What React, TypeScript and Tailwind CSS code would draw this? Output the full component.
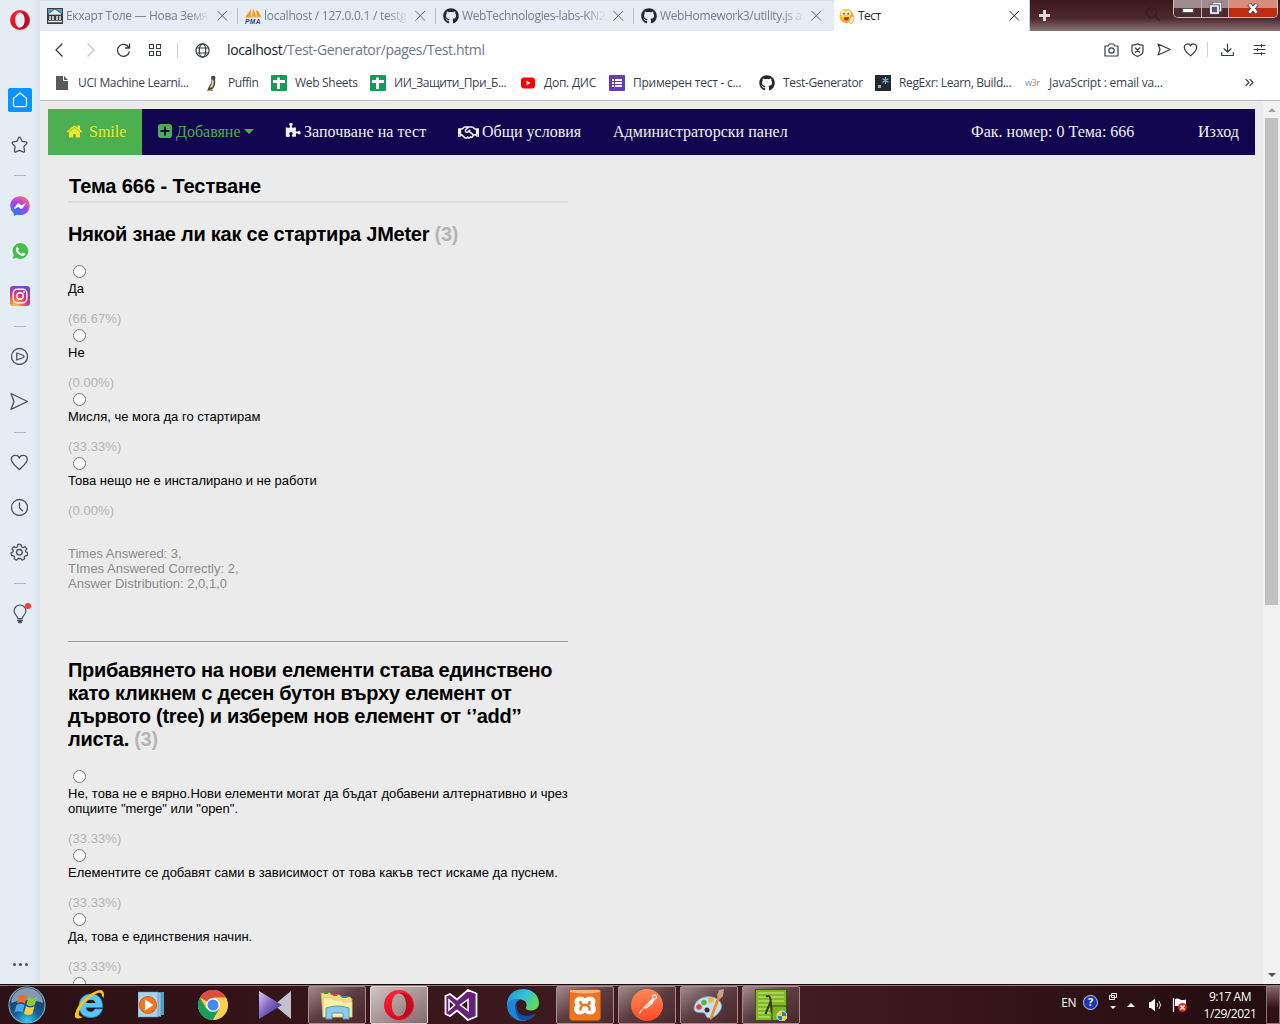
import React from "react";
import { FaGithub, FaFacebookMessenger, FaRegHandshake } from "react-icons/fa";

const line = { fill: "none", stroke: "currentColor", strokeLinecap: "round", strokeLinejoin: "round" } as const;

/* ---------- small shared drawings ---------- */

function CloseX({ className }: { className: string }) {
  return (
    <svg width="12" height="12" viewBox="0 0 12 12" className={className}>
      <path d="M1.500 1l9.500 9.500M11 1L1.500 10.500" stroke="currentColor" strokeWidth="1" />
    </svg>
  );
}

function OperaO({ size, id }: { size: number; id: string }) {
  return (
    <svg width={size} height={size} viewBox="0 0 20 20">
      <defs>
        <linearGradient id={id} x1="0" y1="0" x2="0" y2="1">
          <stop offset="0" stopColor="#ff2238" />
          <stop offset="1" stopColor="#dc0c20" />
        </linearGradient>
      </defs>
      <path fillRule="evenodd" fill={`url(#${id})`} d="M10 0a10 10 0 100 20a10 10 0 000-20zM10 2.400c2.900 0 4.800 3.300 4.800 7.600s-1.900 7.600-4.800 7.600s-4.800-3.300-4.800-7.600s1.900-7.600 4.800-7.600z" />
      <path fill="#a80c1c" d="M10 2.400c2-1 4.500-.6 6 .8c4.500 4 4.500 9.600 0 13.600c-1.500 1.400-4 1.800-6 .8c2.900 0 4.800-3.300 4.800-7.600s-1.900-7.600-4.800-7.600z" opacity=".7" />
    </svg>
  );
}

function SheetIcon() {
  return (
    <svg width="16" height="16" viewBox="0 0 16 16">
      <rect width="16" height="16" rx="1" fill="#0f9d58" />
      <path d="M2 5h12v3H9v6H6V8H2z" fill="#fff" />
      <path d="M6 2.500h3V6H6z" fill="#fff" />
    </svg>
  );
}

function MuseumIcon() {
  return (
    <svg width="16" height="16" viewBox="0 0 16 16">
      <rect width="16" height="16" fill="#3d3d3d" />
      <rect x="1" y="1" width="14" height="6" fill="#35a8dc" />
      <path d="M8 1L1.500 5.500V7h13V5.500z" fill="#eee" stroke="#333" strokeWidth=".7" />
      <path d="M3 8v4M6 8v4M10 8v4M13 8v4" stroke="#eee" strokeWidth="1.500" />
      <path d="M1 13.500h14" stroke="#eee" strokeWidth="1.500" />
    </svg>
  );
}

function PmaIcon() {
  return (
    <svg width="16" height="16" viewBox="0 0 16 16">
      <path d="M0 9.500L6 1v8.500zM7 9l1-9 3.500 9zM12 9l-1-7c3 1 4 4 5 7z" fill="#f79a1c" />
      <path d="M1 10c4-2 10-1 14-1" stroke="#f9b65a" fill="none" />
      <text x="0" y="15.500" fontSize="6.500" fontWeight="bold" fontStyle="italic" fill="#33407c" fontFamily="Liberation Sans, sans-serif" textLength="15.500">PMA</text>
    </svg>
  );
}

function Smiley() {
  return (
    <svg width="16" height="16" viewBox="0 0 16 16">
      <circle cx="7.500" cy="8" r="7" fill="#f9a81a" />
      <circle cx="6.500" cy="6.500" r="5.500" fill="#ffd12e" />
      <circle cx="4.500" cy="5" r="2.200" fill="#fff" />
      <circle cx="9.500" cy="5" r="2.200" fill="#fff" />
      <circle cx="4.900" cy="5.600" r="1.200" fill="#3a7eb8" />
      <circle cx="9.300" cy="5.600" r="1.200" fill="#3a7eb8" />
      <path d="M4.500 9.500l5.500-.5c0 4-4.500 5-5.500.5z" fill="#b4262a" />
      <path d="M12 9l3-1v5l-3 3-2-2.500z" fill="#f6ead8" stroke="#e2a33a" strokeWidth=".6" />
    </svg>
  );
}

/* ---------- tab strip ---------- */

const tabs = [
  { title: "Екхарт Толе — Нова Земя", icon: <MuseumIcon />, track: "tracking-[-0.33px]" },
  { title: "localhost / 127.0.0.1 / testg", icon: <PmaIcon />, track: "tracking-[-0.26px]" },
  { title: "WebTechnologies-labs-KN2", icon: <FaGithub size={16} color="#24292e" />, track: "tracking-[-0.36px]" },
  { title: "WebHomework3/utility.js at", icon: <FaGithub size={16} color="#24292e" />, track: "tracking-[-0.36px]" },
];

function WindowButtons() {
  return (
    <div className="flex h-[18px] w-[105px] overflow-hidden rounded-b-[5px] border border-t-0 border-[#cbbfc0]">
      <div className="flex w-[28px] items-center justify-center border-r border-[#bfb0b2] bg-linear-to-b from-[#a08b8e] from-50% to-[#4d2c30] to-50%">
        <div className="mt-1 h-[5px] w-[12px] rounded-[1px] border border-[#54566b] bg-white" />
      </div>
      <div className="flex w-[27px] items-center justify-center border-r border-[#bfb0b2] bg-linear-to-b from-[#a08b8e] from-50% to-[#4d2c30] to-50%">
        <svg width="13" height="13" viewBox="0 0 13 13">
          <path d="M4.500 1.500h7v7h-7z" fill="none" stroke="#54566b" strokeWidth="3" />
          <path d="M4.500 1.500h7v7h-7z" fill="none" stroke="#fff" strokeWidth="1.500" />
          <path d="M2 4h7v7H2z" fill="#777" stroke="#54566b" strokeWidth="3" />
          <path d="M2 4h7v7H2z" fill="#54566b" stroke="#fff" strokeWidth="1.700" />
        </svg>
      </div>
      <div className="flex flex-1 items-center justify-center bg-linear-to-b from-[#d58d7c] from-50% to-[#bd2c10] to-50%">
        <svg width="12" height="11" viewBox="0 0 12 11" className="mr-px">
          <path d="M2 1l8 9M10 1l-8 9" stroke="#5d4550" strokeWidth="4.500" />
          <path d="M2.300 1.300l7.400 8.400M9.700 1.300l-7.400 8.400" stroke="#fff" strokeWidth="2.600" />
        </svg>
      </div>
    </div>
  );
}

function TabStrip() {
  return (
    <div className="flex h-[31px] bg-[#e4ecf4]">
      <div className="flex w-[794px] border-t border-[#d2dde8]">
        {tabs.map((t, i) => (
          <div key={i} className="flex w-[198px] shrink-0 items-center pl-[7px]">
            <span className="w-[19px]">{t.icon}</span>
            <span className={`w-[144px] whitespace-nowrap text-[12px] text-[#75818e] mask-r-from-85% ${t.track}`}>{t.title}</span>
            <CloseX className="ml-[6px] text-[#5a6672]" />
            <span className={i < 3 ? "ml-auto h-4 w-px bg-[#b3c1cf]" : "hidden"} />
          </div>
        ))}
      </div>
      <div className="flex w-[195px] items-center bg-white pl-[5px]">
        <Smiley />
        <span className="ml-[3px] text-[12px] tracking-[-0.5px] text-[#24292f]">Тест</span>
        <CloseX className="mr-[9px] ml-auto text-[#24292f]" />
      </div>
      <div className="flex flex-1 items-start border-l border-[#c7d4e4] bg-linear-to-b from-[#3a171c] via-[#4e2a2f] via-60% to-[#8d7578]">
        <svg width="13" height="13" viewBox="0 0 13 13" className="mt-[9px] ml-[8px]">
          <path d="M6.500 1v11M1 6.500h11" stroke="#e0d8d9" strokeWidth="3" />
        </svg>
        <svg width="16" height="16" viewBox="0 0 16 16" className="mt-[6px] ml-[94px] text-[#2e2023]">
          <circle cx="6.500" cy="6.500" r="5" {...line} strokeWidth="1.200" />
          <path d="M10 10l4.500 4.500" {...line} strokeWidth="1.200" />
        </svg>
        <div className="ml-[12px]"><WindowButtons /></div>
      </div>
    </div>
  );
}

/* ---------- address bar ---------- */

function AddressBar() {
  return (
    <div className="flex h-[38px] items-center bg-white text-[#333d47]">
      <svg width="10" height="14" viewBox="0 0 10 14" className="ml-[14px]"><path d="M8 1L2 7l6 6" {...line} strokeWidth="1.300" /></svg>
      <svg width="10" height="14" viewBox="0 0 10 14" className="ml-[22px] text-[#c3c7cb]"><path d="M2 1l6 6-6 6" {...line} strokeWidth="1.300" /></svg>
      <svg width="15" height="15" viewBox="0 0 15 15" className="ml-[20px]">
        <path d="M12.800 4.500A6 6 0 1013.300 9M13.500 1v4h-4" {...line} strokeWidth="1.300" />
      </svg>
      <svg width="14" height="12" viewBox="0 0 14 12" className="ml-[17px]">
        <path d="M1.500.5h4v4h-4zM8.500.5h4v4h-4zM1.500 7.500h4v4h-4zM8.500 7.500h4v4h-4z" {...line} strokeWidth="1.100" />
      </svg>
      <span className="ml-[15px] h-[15px] w-px bg-[#c9d0d6]" />
      <svg width="15" height="15" viewBox="0 0 15 15" className="ml-[17px]">
        <g {...line} strokeWidth="1.200"><circle cx="7.500" cy="7.500" r="6.600" /><ellipse cx="7.500" cy="7.500" rx="3.200" ry="6.600" /><path d="M1.500 5h12M1.500 10h12" /></g>
      </svg>
      <span className="mb-px ml-[17px] text-[14px] tracking-[-0.37px] text-[#6c7884]"><span className="text-[#15191d]">localhost</span>/Test-Generator/pages/Test.html</span>
      <div className="mr-[14px] mb-px ml-auto flex items-center">
        <svg width="15" height="14" viewBox="0 0 15 14"><g {...line} strokeWidth="1.200"><path d="M1 3h3l1.500-2h4L11 3h3v10H1z" /><circle cx="7.500" cy="7.500" r="2.700" /></g></svg>
        <svg width="13" height="14" viewBox="0 0 13 14" className="ml-[12px]"><g {...line} strokeWidth="1.200"><path d="M6.500.7C5 2 3 2.200 1 2.200v6c0 3 3 4.300 5.500 5.200 2.500-.9 5.500-2.200 5.500-5.200v-6c-2 0-4-.2-5.500-1.500z" /><path d="M4.300 5l4.400 4.400M8.700 5L4.300 9.400" /></g></svg>
        <svg width="14" height="13" viewBox="0 0 14 13" className="ml-[13px]"><path d="M1 1l12.300 5.500L1 12l2-5.500z" {...line} strokeWidth="1.200" /></svg>
        <svg width="15" height="14" viewBox="0 0 15 14" className="ml-[12px]"><path d="M7.500 3c1-3 6-2.700 6.200 1.200 0 4-4 6.300-6.200 8.700C5.300 10.500 1.300 8.200 1.300 4.200 1.500.300 6.500 0 7.500 3z" {...line} strokeWidth="1.200" /></svg>
        <span className="ml-[9px] h-[15px] w-px bg-[#c9d0d6]" />
        <svg width="13" height="13" viewBox="0 0 13 13" className="ml-[13px]"><path d="M6.500 1v8M3 5.800L6.500 9 10 5.800M.7 9.500v3h11.600v-3" {...line} strokeWidth="1.200" /></svg>
        <svg width="13" height="12" viewBox="0 0 13 12" className="ml-[19px]"><path d="M1 1.500h11M1 5.500h11M1 9.500h11M8.500.5v2.500M4.500 4.500v2.500M8.500 8.500v2.500" {...line} strokeWidth="1.100" /></svg>
      </div>
    </div>
  );
}

/* ---------- bookmarks ---------- */

const bookmarks = [
  { label: "UCI Machine Learni...", width: "w-[150px]", track: "tracking-[-0.35px]", icon: <svg width="16" height="16" viewBox="0 0 16 16"><path d="M2 1h7v5h5v9H2zM10 1l4 4h-4z" fill="#5a5a5a" /></svg> },
  { label: "Puffin", width: "w-[67px]", track: "tracking-[-0.45px]", icon: <svg width="16" height="16" viewBox="0 0 16 16"><path d="M7 1.500l3-.8 1.500 1.300-.5 3c1 4-1 8-3 9.500l-4.500 1c0-3 3.500-6 4-9z" fill="#4f4436" /><path d="M8.500 4c-1 3 0 5-3 9l3-1c1.500-3 2-6 0-8z" fill="#ddd0ae" /><path d="M3 15.500h6" stroke="#b79345" /></svg> },
  { label: "Web Sheets", width: "w-[99px]", track: "tracking-[-0.3px]", icon: <SheetIcon /> },
  { label: "ИИ_Защити_При_Б...", width: "w-[150px]", track: "tracking-[-0.43px]", icon: <SheetIcon /> },
  { label: "Доп. ДИС", width: "w-[89px]", track: "tracking-[-0.25px]", icon: <svg width="16" height="16" viewBox="0 0 16 16"><rect x="1" y="2.500" width="14" height="11" rx="3" fill="#f00" /><path d="M6.500 5.500v5l4-2.500z" fill="#fff" /></svg> },
  { label: "Примерен тест - с...", width: "w-[150px]", track: "tracking-[-0.25px]", icon: <svg width="16" height="16" viewBox="0 0 16 16"><rect width="16" height="16" rx="1" fill="#673ab7" /><path d="M3 4h2v2H3zM6 4h7v2H6zM3 7h2v2H3zM6 7h7v2H6zM3 10h2v2H3zM6 10h7v2H6z" fill="#fff" /></svg> },
  { label: "Test-Generator", width: "w-[116px]", track: "tracking-[-0.35px]", icon: <FaGithub size={16} color="#24292e" /> },
  { label: "RegExr: Learn, Build...", width: "w-[150px]", track: "tracking-[-0.38px]", icon: <svg width="16" height="16" viewBox="0 0 16 16"><rect width="16" height="16" fill="#25282c" /><rect x="3" y="10" width="3" height="3" fill="#6fb5ea" /><path d="M10.500 2v7M7.500 3.700l6 3.600M13.500 3.700l-6 3.600" stroke="#6fb5ea" strokeWidth="1.300" /></svg> },
  { label: "JavaScript : email va...", width: "w-[200px]", track: "tracking-[-0.25px]", icon: <span className="text-[9px] tracking-[-0.4px] text-[#5f8fc4]">w<span className="text-[#f4793b]">3</span>r</span> },
];

function BookmarkBar() {
  return (
    <div className="flex h-[32px] items-center border-b border-[#b0becb] bg-white pb-[4px] pl-[14px] text-[12px] text-[#39424c]">
      {bookmarks.map((b) => (
        <div key={b.label} className={`flex shrink-0 items-center ${b.width}`}>
          <span className="mr-2 flex w-4 shrink-0">{b.icon}</span>
          <span className={`whitespace-nowrap ${b.track}`}>{b.label}</span>
        </div>
      ))}
      <svg width="9" height="7" viewBox="0 0 9 7" className="ml-[20px]"><path d="M1 .5l3 3-3 3M5 .5l3 3-3 3" {...line} strokeWidth="1.100" /></svg>
    </div>
  );
}

/* ---------- browser side bar ---------- */

function Cell({ children, line: outlined }: { children: React.ReactNode; line?: boolean }) {
  return <div className={`flex h-[45px] w-full shrink-0 items-center justify-center ${outlined ? "pr-[2px] pb-px" : ""}`}>{children}</div>;
}

function Divider({ tall }: { tall?: boolean }) {
  return (
    <div className={`flex w-full shrink-0 items-center justify-center ${tall ? "h-4" : "h-[15px]"}`}>
      <span className="h-px w-3 bg-[#a9bbcb]" />
    </div>
  );
}

function SideBar() {
  return (
    <aside className="flex w-10 shrink-0 flex-col items-center bg-linear-to-r from-[#e4ecf4] from-80% to-[#dae4ee] text-[#46525e]">
      <div className="mb-[38px] flex h-10 shrink-0 items-center"><OperaO size={20} id="opera-side" /></div>
      <div className="flex h-[45px] shrink-0 items-center pb-px">
        <span className="flex h-6 w-6 items-center justify-center rounded-[2px] bg-[#0b93ff] text-white">
          <svg width="16" height="16" viewBox="0 0 16 16"><path d="M8 1L1.500 6.300V13q0 1.700 1.700 1.700h9.600q1.700 0 1.700-1.700V6.300z" {...line} strokeWidth="1.200" /></svg>
        </span>
      </div>
      <Cell line><svg width="18" height="18" viewBox="0 0 18 18"><path d="M9.500 1.200q.7 0 1 .8l1.600 3.300 3.900.6q1.500.4.600 1.700L13.900 10.600l.6 4.300q0 1.500-1.500 1L9.500 14.300l-3.500 1.600q-1.500.5-1.500-1l.6-4.300L2.400 7.600q-.9-1.300.6-1.700l3.900-.6L8.500 2q.3-.8 1-.8z" {...line} strokeWidth="1.300" /></svg></Cell>
      <Divider />
      <Cell>
        <svg width="20" height="20" viewBox="0 0 20 20">
          <defs><radialGradient id="msg" cx=".2" cy="1" r="1.100"><stop offset="0" stopColor="#0a8cff" /><stop offset=".6" stopColor="#a040ff" /><stop offset="1" stopColor="#ff6573" /></radialGradient></defs>
          <FaFacebookMessenger size={20} fill="url(#msg)" color="url(#msg)" />
          <path d="M4.500 12.200l3.500-3.800 2.500 2 4-2-3.500 4-2.600-2z" fill="#fff" stroke="#fff" />
        </svg>
      </Cell>
      <Cell>
        <svg width="20" height="20" viewBox="0 0 20 20">
          <path d="M10.500.8a9 9 0 11-4 17.200L.8 19.300l1.700-5A9 9 0 0110.500.8z" fill="#fff" />
          <path d="M10.500 2a8 8 0 11-4 15L2.500 18l1.200-3.800A8 8 0 0110.500 2z" fill="#43c04f" />
          <path d="M7.500 5.500l1.500 2.700-1 1.300c1 1.800 2 2.500 3.600 3.200l1.300-1.300 2.400 1.300c0 1.700-1.400 2.500-2.900 2.300-3.500-.7-6.200-3.500-6.500-6.600 0-1.400.6-2.500 1.600-2.900z" fill="#fff" />
        </svg>
      </Cell>
      <Cell>
        <svg width="20" height="20" viewBox="0 0 20 20">
          <defs>
            <radialGradient id="ig" cx=".25" cy="1.050" r="1.100"><stop offset="0" stopColor="#ffd35c" /><stop offset=".3" stopColor="#fb7b3c" /><stop offset=".6" stopColor="#d92f80" /><stop offset="1" stopColor="#6b49d4" /></radialGradient>
          </defs>
          <rect width="20" height="20" rx="3" fill="url(#ig)" />
          <rect x="3.200" y="3.200" width="13.600" height="13.600" rx="4" fill="none" stroke="#fff" strokeWidth="1.400" />
          <circle cx="10" cy="10" r="3.200" fill="none" stroke="#fff" strokeWidth="1.400" />
          <circle cx="14" cy="6" r="1" fill="#fff" />
        </svg>
      </Cell>
      <Divider tall />
      <Cell line><svg width="18" height="18" viewBox="0 0 18 18"><g {...line} strokeWidth="1.300"><circle cx="9.500" cy="9.500" r="8" /><path d="M6.800 6v7l6.700-2.500q1-1 0-2L6.800 6z" /></g></svg></Cell>
      <Cell line><svg width="18" height="18" viewBox="0 0 18 18"><path d="M1 1.500l16.500 8L1 17.300l3-7.800z" {...line} strokeWidth="1.300" /></svg></Cell>
      <Divider tall />
      <Cell line><svg width="18" height="18" viewBox="0 0 18 18"><path d="M9.300 5c1-3.800 7.800-3.600 8 1.200 0 4-5 7.300-8 10.300C6.300 13.500 1.300 10.200 1.300 6.200 1.500 1.400 8.300 1.200 9.300 5z" {...line} strokeWidth="1.300" /></svg></Cell>
      <Cell line><svg width="18" height="18" viewBox="0 0 18 18"><g {...line} strokeWidth="1.300"><circle cx="9.500" cy="9.500" r="8" /><path d="M9.500 5v5l3 2.800" /></g></svg></Cell>
      <Cell line>
        <svg width="18" height="18" viewBox="0 0 18 18"><g {...line} strokeWidth="1.300" transform="translate(.4 .4)"><path d="M7.400 1h3.200l.4 2.400 1.500.9 2-1.100 1.900 2.300-1.300 1.800.3 1.200 2 .9-.5 2.700-2.200.3-.9 1.100.4 2.100-2.500 1.100-1.500-1.600H7.800l-1.500 1.600-2.500-1.100.4-2.100-.9-1.100-2.200-.3L.6 9.400l2-.9.3-1.200-1.300-1.800 1.900-2.300 2 1.100L7 3.400z" /><circle cx="9" cy="8.900" r="2.800" /></g></svg>
      </Cell>
      <Divider tall />
      <Cell>
        <div className="relative">
          <svg width="14" height="20" viewBox="0 0 14 20"><g {...line} strokeWidth="1.200"><path d="M4.800 14.500c0-3-3.800-4-3.800-7.500a6 6 0 0112 0c0 3.500-3.800 4.500-3.800 7.500z" /><path d="M5 16.500h4M6 18.300h2" strokeWidth="2" /></g></svg>
          <span className="absolute -top-[1px] -right-[4px] h-[6px] w-[6px] rounded-full bg-[#ff3a30]" />
        </div>
      </Cell>
      <div className="mt-auto mb-[18px] flex gap-[3px]">
        <span className="h-[3px] w-[3px] rounded-full bg-[#46525e]" />
        <span className="h-[3px] w-[3px] rounded-full bg-[#46525e]" />
        <span className="h-[3px] w-[3px] rounded-full bg-[#46525e]" />
      </div>
    </aside>
  );
}

/* ---------- site ---------- */

function NavBar() {
  return (
    <nav className="flex h-[46px] bg-[#10054e] font-['Liberation_Serif',serif] text-[16px] leading-[18px] text-[#f2f2f2]">
      <div className="flex w-[94px] items-center bg-[#4caf50] pl-[18px] text-[#f0e92b]">
        <svg width="17" height="17" viewBox="0 0 1792 1792" fill="currentColor" className="mb-[2px]"><path d="M1472 992v480q0 26-19 45t-45 19h-384v-384h-256v384h-384q-26 0-45-19t-19-45v-480q0-1 .5-3t.5-3l575-474 575 474q1 2 1 6zm223-69l-62 74q-8 9-21 11h-3q-13 0-21-7l-692-577-692 577q-12 8-24 7-13-2-21-11l-62-74q-8-10-7-23.500t11-21.500l719-599q32-26 76-26t76 26l244 204v-195q0-14 9-23t23-9h192q14 0 23 9t9 23v408l219 182q10 8 11 21.500t-7 23.500z" /></svg>
        <span className="ml-[6px]">Smile</span>
      </div>
      <div className="flex w-[127px] items-center pl-[16px] text-[#4caf50]">
        <svg width="14" height="14" viewBox="0 0 14 14" className="mb-[2px]"><rect width="14" height="14" rx="2.700" fill="currentColor" /><path d="M7 2.500v9M2.500 7h9" stroke="#10054e" strokeWidth="2" /></svg>
        <span className="ml-[4px]">Добавяне</span>
        <span className="mb-px ml-[3px] border-x-[5px] border-t-[5px] border-x-transparent border-t-[#4caf50]" />
      </div>
      <div className="flex w-[173px] items-center pl-[16px]">
        <svg width="16" height="16" viewBox="0 0 1792 1792" fill="currentColor" className="mb-[3px]"><path d="M1755 1083q0 81-44.500 135t-123.500 54q-41 0-77.500-17.500t-59-38-56.500-38-71-17.500q-110 0-110 124 0 39 16 115t15 115v5q-22 0-33 1-34 3-97.500 11.500t-115.500 13.500-98 5q-61 0-103-26.500t-42-83.500q0-37 17.500-71t38-56.500 38-59 17.500-77.500q0-79-54-123.500t-135-44.500q-84 0-143 45.500t-59 127.500q0 43 15 83t33.500 64.500 33.500 53 15 50.500q0 45-46 89-37 35-117 35-95 0-245-24-9-2-27.500-4t-27.500-4l-13-2q-1 0-3-1-2 0-2-1v-1024q2 1 17.500 3.500t34 5 21.500 3.500q150 24 245 24 80 0 117-35 46-44 46-89 0-22-15-50.500t-33.500-53-33.500-64.500-15-83q0-82 59-127.500t144-45.500q80 0 134 44.500t54 123.500q0 41-17.500 77.500t-38 59-38 56.500-17.500 71q0 57 42 83.500t103 26.500q64 0 180-15t163-17v2q-1 2-3.500 17.500t-5 34-3.500 21.500q-24 150-24 245 0 80 35 117 44 46 89 46 22 0 50.500-15t53-33.500 64.500-33.500 83-15q82 0 127.500 59t45.500 143z" /></svg>
        <span className="ml-[3px] tracking-[0.05px]">Започване на тест</span>
      </div>
      <div className="flex w-[155px] items-center pl-[16px]">
        <FaRegHandshake size={21} />
        <span className="ml-[3px]">Общи условия</span>
      </div>
      <div className="flex items-center pl-[16px] tracking-[0.03px]">Администраторски панел</div>
      <div className="ml-auto flex items-center pr-[16px]">
        <span className="w-[227px]">Фак. номер: 0 Тема: 666</span>
        <span>Изход</span>
      </div>
    </nav>
  );
}

function Answer({ text, percent }: { text: string; percent: string }) {
  return (
    <div className="shrink-0">
      <label className="block">
        <span className="flex h-[19px] items-center pl-[5px]">
          <span className="h-[13px] w-[13px] rounded-full border border-[#767676] bg-white" />
        </span>
        <span className="block text-black">{text}</span>
      </label>
      <p className="mt-[15px] tracking-[0.08px] text-[#b5b5b5]">{percent}</p>
    </div>
  );
}

const first = [
  ["Да", "(66.67%)"],
  ["Не", "(0.00%)"],
  ["Мисля, че мога да го стартирам", "(33.33%)"],
  ["Това нещо не е инсталирано и не работи", "(0.00%)"],
];
const second = [
  ["Не, това не е вярно.Нови елементи могат да бъдат добавени алтернативно и чрез опциите \"merge\" или \"open\".", "(33.33%)"],
  ["Елементите се добавят сами в зависимост от това какъв тест искаме да пуснем.", "(33.33%)"],
  ["Да, това е единствения начин.", "(33.33%)"],
  ["", ""],
];

function Page() {
  return (
    <div className="flex min-h-0 flex-1 bg-[#ebebeb]">
      <main className="min-w-0 flex-1 overflow-hidden pt-2 pr-2 pl-2">
        <NavBar />
        <div className="ml-5 w-[502px] font-['Liberation_Sans',sans-serif] text-[13px] leading-[15px]">
          <h1 className="mt-5 h-7 w-[500px] border-b-2 border-[#dcdcdc] pl-px text-[20px] leading-[23px] font-bold tracking-[-0.09px]">Тема 666 - Тестване</h1>
          <h2 className="mt-[20px] mb-4 w-[500px] text-[20px] leading-[23px] font-bold tracking-[-0.25px]">
            Някой знае ли как се стартира JMeter <span className="text-[#b5b5b5]">(3)</span>
          </h2>
          {first.map(([t, p]) => <Answer key={t} text={t} percent={p} />)}
          <div className="mt-7 text-[#8c8c8c]">
            <p>Times Answered: 3,</p>
            <p>TImes Answered Correctly: 2,</p>
            <p>Answer Distribution: 2,0,1,0</p>
          </div>
          <div className="mt-[50px] h-[2px] w-[500px] border-t border-b border-t-[#9a9a9a] border-b-[#eeeeee]" />
          <h2 className="mt-[16px] mb-4 w-[500px] text-[20px] leading-[23px] font-bold tracking-[-0.28px]">
            Прибавянето на нови елементи става единствено<br />
            като кликнем с десен бутон върху елемент от<br />
            дървото (tree) и изберем нов елемент от ‘’add’’<br />
            листа. <span className="text-[#b5b5b5]">(3)</span>
          </h2>
          {second.map(([t, p]) => <Answer key={t} text={t} percent={p} />)}
        </div>
      </main>
      <div className="flex w-[17px] flex-col items-center bg-[#f1f1f1]">
        <span className="mt-[7px] border-x-[4px] border-b-[4px] border-x-transparent border-b-[#a3a3a3]" />
        <span className="mt-[6px] h-[487px] w-[13px] bg-[#c1c1c1]" />
        <span className="mt-auto mb-[7px] border-x-[4px] border-t-[4px] border-x-transparent border-t-[#505050]" />
      </div>
    </div>
  );
}

/* ---------- task bar ---------- */

function StartOrb() {
  return (
    <svg width="38" height="38" viewBox="0 0 38 38">
      <defs><radialGradient id="orb" cx=".5" cy=".95" r=".8"><stop offset="0" stopColor="#30d0ff" /><stop offset=".45" stopColor="#145e94" /><stop offset="1" stopColor="#1d3c5e" /></radialGradient></defs>
      <circle cx="19" cy="19" r="18" fill="url(#orb)" stroke="#7ba0b8" strokeWidth="1.200" />
      <path d="M3 17a16 15 0 0132 0c-10-4-22-4-32 0z" fill="#d6e4ee" opacity=".55" />
      <path d="M11 10q4-2.500 8 0l-2 7.500q-4-2.500-8 0z" fill="#ee6a30" />
      <path d="M20.500 11q4 3 8.500 0l-2 7.500q-4.500 3-8.500 0z" fill="#90c83e" />
      <path d="M8.500 19q4-2.500 8 0l-2 7.500q-4-2.500-8 0z" fill="#4ca8e8" />
      <path d="M18 20q4 3 8.500 0l-2 7.500q-4.500 3-8.500 0z" fill="#fcd03c" />
    </svg>
  );
}

const apps: { boxed?: boolean; active?: boolean; icon: React.ReactNode }[] = [
  { icon: (
    <svg width="32" height="32" viewBox="0 0 32 32">
      <path d="M29.500 20c-1.500 5-5.500 8.500-11.500 8.500-7.500 0-12-4.500-12-11.500S10.500 5 18 5s12 5 11.500 13.500H13c0 5 7 6 9 1.500z" fill="#56c8f6" stroke="#2089c8" strokeWidth=".8" />
      <path d="M13 14h9.500c-.5-4.500-8.500-4.500-9.500 0z" fill="#351216" />
      <path d="M30.500 9c1.500-6-.5-9.500-6-7.500C14 5 4 16 2 25c-1 5.500 3.500 5.500 9 2.500-9.500 2-5-9 4.500-17.500C23 3.500 29.500 1.500 29 7z" fill="#f8c515" />
    </svg>) },
  { icon: (
    <svg width="26" height="27" viewBox="0 0 26 27">
      <rect x="8" y="1" width="18" height="23" fill="#5a9cc2" /><rect x="5" y="1.500" width="18" height="24" fill="#8fc4e0" stroke="#4f89aa" strokeWidth=".6" /><rect x="0" y="1" width="20" height="25" fill="#a6d4ea" stroke="#5a93b4" strokeWidth=".6" />
      <circle cx="10" cy="14" r="8.500" fill="#f2761e" stroke="#d95f10" /><path d="M7 8.500v11l8.500-5.500z" fill="#fff" />
    </svg>) },
  { icon: (
    <svg width="30" height="30" viewBox="0 0 30 30">
      <circle cx="15" cy="15" r="15" fill="#fcd04b" />
      <path d="M15 15L2 7.500A15 15 0 0128 7.500H15z" fill="#dd4b3e" />
      <path d="M15 15l-6.500 3.800L2 7.500a15 15 0 0013 22.500l6.500-11.200z" fill="#1b9d5c" />
      <path d="M15 8h13a15 15 0 01-13 22l6.500-11.200z" fill="#fcd04b" />
      <circle cx="15" cy="15" r="7" fill="#fff" /><circle cx="15" cy="15" r="5.500" fill="#4688f1" />
    </svg>) },
  { icon: (
    <svg width="32" height="28" viewBox="0 0 32 28">
      <defs><linearGradient id="kmp" x1="0" y1="0" x2="1" y2="1"><stop offset="0" stopColor="#d8ccf2" /><stop offset=".5" stopColor="#7860bd" /><stop offset="1" stopColor="#3c2783" /></linearGradient></defs>
      <path d="M32 0v28L15 14z" fill="#c5c1cc" /><path d="M0 0l23 14L0 28z" fill="url(#kmp)" />
    </svg>) },
  { boxed: true, icon: (
    <svg width="34" height="30" viewBox="0 0 34 30">
      <path d="M1 3h9l1 2h9l1 2h9l2 2v18H3z" fill="#f3df82" stroke="#c8a84e" strokeWidth=".7" />
      <path d="M3 8h9l1 2h9l1 2h9v15H3z" fill="#fbefa9" stroke="#d8be64" strokeWidth=".6" />
      <path d="M4 2h4v2H4z" fill="#1fa83c" /><path d="M13 4h4v2h-4z" fill="#e33d25" /><path d="M22 6h5v2h-5z" fill="#2191de" />
      <path d="M6 18q11-4 23 0v11h-6v-6h-11v6H6z" fill="#8ecbe8" stroke="#4d9dc4" />
    </svg>) },
  { boxed: true, active: true, icon: <OperaO size={30} id="opera-task" /> },
  { icon: (
    <svg width="34" height="32" viewBox="0 0 34 32">
      <path d="M1.500 7L6 5l7 5.500L24 1l8.500 3.500v23L24 31l-11-9.500L6 27l-4.500-2z" fill="#68217a" stroke="#fff" strokeWidth="1.800" strokeLinejoin="round" />
      <path d="M5 11v10l5.500-5zM24 10.500v11L16.500 16z" fill="#351216" stroke="#fff" strokeWidth="1.500" />
    </svg>) },
  { icon: (
    <svg width="32" height="32" viewBox="0 0 32 32">
      <defs><linearGradient id="edge" x1="0" y1="0" x2="1" y2=".5"><stop offset="0" stopColor="#1f8fd8" /><stop offset=".6" stopColor="#35c5d3" /><stop offset="1" stopColor="#62d957" /></linearGradient></defs>
      <path d="M0 16C0 6 7 0 16 0s16 6 16 14c0 5-4 7.500-8 7.500-4 0-6-1.500-5-3 2-4-1-8-6-8C6 10.500 1 14 0 16z" fill="url(#edge)" />
      <path d="M0 16c1-5 7-7 13-5.500-5 2-6.500 8-2.500 13 4 4.500 12 5 18 1.500C24 30 20 32 16 32 7 32 0 25 0 16z" fill="#1d86da" />
      <path d="M11 14c-3 5 0 11 6 12.500 5 1 9-.5 12-2C26 30 20 32 16 31.500 9 30 6 19 11 14z" fill="#144f9e" />
    </svg>) },
  { boxed: true, icon: (
    <svg width="32" height="32" viewBox="0 0 32 32">
      <rect x=".5" y=".5" width="31" height="31" rx="3" fill="#ee7420" stroke="#b85510" /><path d="M1 3q15 3 30 0V2q0-1-1-1H2Q1 1 1 2z" fill="#f9b27d" />
      <path d="M11.500 8q2.500 0 4.500 2 2-2 4.500-2 5.500 0 5.500 4.500 0 2.500-1 3.500 1.500 1.500 1.500 4 0 5-5.500 5-3 0-5-2-2 2-5 2-5.500 0-5.500-5 0-2.500 1.500-4-1-1-1-3.500Q6 8 11.500 8z" fill="#fff" stroke="#fff" />
      <path d="M11.500 13v.5q0 2.500 3 2.500h3q3 0 3-2.500V13M11.500 20.500V20q0-2 1.500-3M20.500 20.500V20q0-2-1.500-3" fill="none" stroke="#ee7420" strokeWidth="2.600" strokeLinecap="round" />
    </svg>) },
  { boxed: true, icon: (
    <svg width="32" height="32" viewBox="0 0 32 32">
      <defs><linearGradient id="postman" x1="0" y1="0" x2="0" y2="1"><stop offset="0" stopColor="#ff8a5a" /><stop offset="1" stopColor="#ff4a26" /></linearGradient></defs>
      <circle cx="16" cy="16" r="16" fill="url(#postman)" />
      <path d="M8 24l6-6M12.500 19l7-7 2.500 2-6.500 5z" stroke="#fff" strokeWidth="1" fill="#f9cfc0" /><path d="M18 12.500l4-3.500 1.500 2.500-2.500 3zM7 25l2.500-2 .5 1z" fill="#fff" /><circle cx="23.500" cy="8" r="2.200" fill="#ff8a69" stroke="#fff" />
    </svg>) },
  { boxed: true, icon: (
    <svg width="32" height="32" viewBox="0 0 32 32">
      <path d="M1 19C2 10 11 6.500 19 8s11 8 9 12-6 9-12 9c-4 0-2-4-5-5s-10 1-10-5z" fill="#c6def1" stroke="#7ba2c4" />
      <circle cx="6" cy="18" r="2.800" fill="#e14331" /><circle cx="11" cy="13.500" r="2.800" fill="#50b648" /><circle cx="18" cy="11" r="2.800" fill="#f5b72f" /><circle cx="14" cy="21" r="2.500" fill="#40262a" />
      <path d="M28 7L19 30l-2 1 0-3 8-22z" fill="#ed8a29" /><path d="M24 6l2-5 5-1-1 7-3 3z" fill="#c7a27e" />
    </svg>) },
  { boxed: true, icon: (
    <svg width="32" height="32" viewBox="0 0 32 32">
      <rect x=".5" y=".5" width="31" height="31" fill="#82b820" stroke="#3d5515" />
      <path d="M3 4h26M3 8h26M3 12h26M3 16h13M3 20h13M3 24h12M3 28h12" stroke="#b5db67" strokeWidth="1.300" />
      <path d="M11 7.500q4-2 4.500 3l1 11q.3 3 2.500 2.500M15.500 13l-5 12" fill="none" stroke="#303b27" strokeWidth="2" />
      <rect x="17" y="17" width="14.500" height="14.500" fill="#7ab51d" stroke="#354a14" /><circle cx="27" cy="27" r="5" fill="#287fc0" stroke="#eee" /><path d="M27 22v5h-5a5 5 0 015-5zM27 27h5a5 5 0 01-5 5z" fill="#f7d43d" />
    </svg>) },
];

function TaskBar() {
  return (
    <footer className="flex h-10 shrink-0 items-center border-t border-[#170709] bg-linear-to-r from-[#2b1014] via-[#431d20] via-60% to-[#220b0f] font-['Open_Sans',sans-serif] text-white shadow-[inset_0_1px_0_#96797c]">
      <div className="flex w-[58px] pl-[8px]"><StartOrb /></div>
      {apps.map((a, i) => (
        <div key={i} className="flex w-[62px] justify-center">
          <div className={`flex h-[38px] w-[58px] items-center justify-center ${a.boxed ? (a.active ? "rounded-[2px] border border-[#ddd3d4] bg-linear-to-br from-[#cfc4c5] to-[#84696c]" : "rounded-[2px] border border-[#a58d90] bg-linear-to-br from-[#a08a8d] via-[#5a3b3f] to-[#4a292d]") : ""}`}>{a.icon}</div>
        </div>
      ))}
      <div className="ml-auto flex h-full items-center">
        <span className="mb-1 text-[12px] tracking-[-0.5px]">EN</span>
        <span className="mb-[5px] ml-[7px] flex h-[15px] w-[15px] items-center justify-center rounded-full border border-[#c9cde8] bg-[#1c35c0] text-[11px] font-bold">?</span>
        <svg width="9" height="18" viewBox="0 0 9 18" className="mb-[7px] ml-[10px]"><path d="M3.500 1.500h5v4h-5zM1.500 3.500h5v4h-5z" fill="#2c1014" stroke="#fff" /><path d="M2 14h6l-3 3z" fill="#fff" /></svg>
        <span className="ml-[10px] border-x-[4px] border-b-[4px] border-x-transparent border-b-white" />
        <svg width="15" height="14" viewBox="0 0 15 14" className="ml-[13px]"><path d="M1 4h2l4-3.500v13L3 10H1z" fill="#fff" /><path d="M9 5q1.500 2 0 4M11 3q3 4 0 8" fill="none" stroke="#ddd" /></svg>
        <svg width="16" height="16" viewBox="0 0 16 16" className="mt-px ml-[9px]"><path d="M1.500 1v14" stroke="#fff" strokeWidth="1.300" /><path d="M3 2q3-1 5 .5 2 1 6 0V9H3z" fill="#fff" /><circle cx="10.500" cy="10.500" r="4.500" fill="#d92a22" /><path d="M8.500 8.500l4 4M12.500 8.500l-4 4" stroke="#fff" strokeWidth="1.500" /></svg>
        <div className="ml-[14px] w-[56px] text-center text-[12px] leading-[17px] tracking-[-0.45px]"><div>9:17 AM</div><div>1/29/2021</div></div>
        <div className="ml-[8px] h-[38px] w-[14px] border border-[#8d7477] bg-linear-to-b from-[#85686c] to-[#2c1014] to-60%" />
      </div>
    </footer>
  );
}

export default function App() {
  return (
    <div className="flex h-[1024px] w-[1280px] flex-col overflow-hidden bg-[#ebebeb] font-['Open_Sans','Noto_Sans',sans-serif]">
      <div className="flex min-h-0 flex-1">
        <SideBar />
        <div className="flex min-w-0 flex-1 flex-col">
          <TabStrip />
          <AddressBar />
          <BookmarkBar />
          <Page />
        </div>
      </div>
      <TaskBar />
    </div>
  );
}
